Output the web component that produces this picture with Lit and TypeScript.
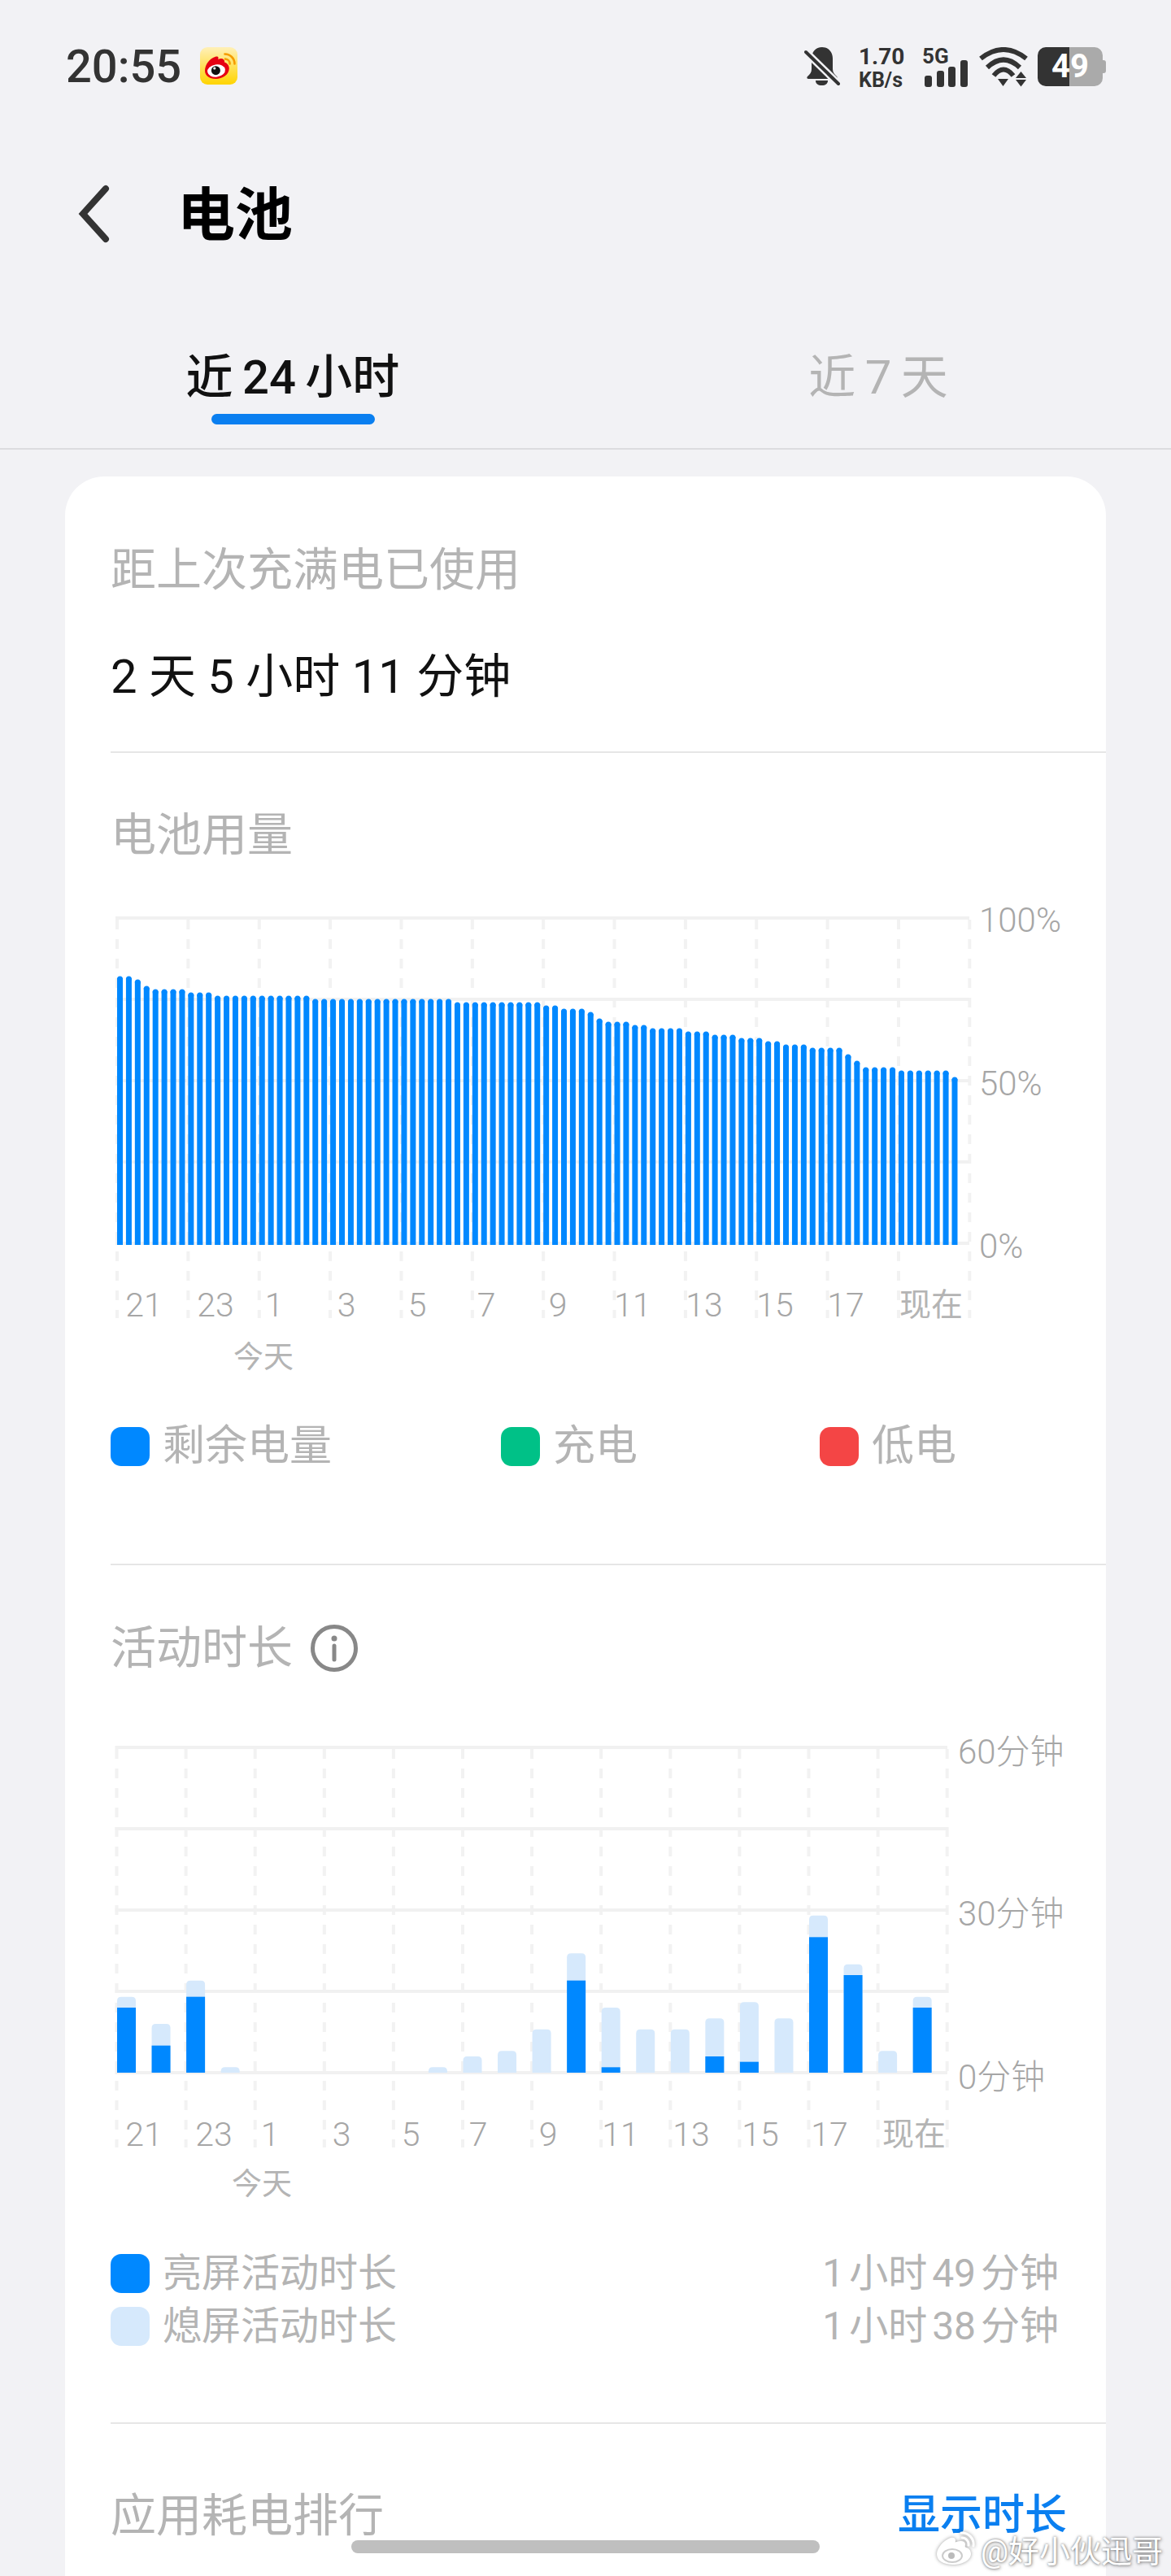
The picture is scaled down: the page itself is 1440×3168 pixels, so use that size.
import { LitElement, html, svg, css } from 'lit';
import { customElement } from 'lit/decorators.js';

// battery level per 15 minute slot, in percent
const LEVELS = [
  82, 82, 81, 79, 78, 78, 78, 78, 77, 77, 77,
  76, 76, 76, 76, 76, 76, 76, 76, 76, 76, 76,
  75, 75, 75, 75, 75, 75, 75, 75, 75, 75, 75, 75, 75, 75, 75, 75,
  74, 74, 74, 74, 74, 74, 74, 74, 74, 74,
  73, 73, 72, 72, 72, 71, 69, 68, 68, 68, 67, 67,
  66, 66, 66, 66, 65, 65, 65, 64, 64, 64, 63, 63, 63, 62, 62,
  61, 61, 61, 60, 60, 60, 60, 58, 56, 54, 54, 54, 54,
  53, 53, 53, 53, 53, 53, 51,
];

// [screen on, screen off] minutes per hour
const ACTIVITY: [number, number][] = [
  [12, 2], [5, 4], [14, 3], [0, 1], [0, 0], [0, 0], [0, 0], [0, 0], [0, 0],
  [0, 1], [0, 3], [0, 4], [0, 8], [17, 5], [1, 11], [0, 8], [0, 8], [3, 7],
  [2, 11], [0, 10], [25, 4], [18, 2], [0, 4], [12, 2],
];

const BATTERY_X: [string, number][] = [
  ['21', 41], ['23', 129], ['1', 201], ['3', 290], ['5', 377], ['7', 462],
  ['9', 550], ['11', 642], ['13', 730], ['15', 817], ['17', 904], ['现在', 1009],
];

const ACTIVITY_X: [string, number][] = [
  ['21', 41], ['23', 127], ['1', 196], ['3', 284], ['5', 369], ['7', 452],
  ['9', 538], ['11', 627], ['13', 714], ['15', 799], ['17', 884], ['现在', 988],
];

const BLUE = '#0088ff';
const PALE = '#d6e9fc';

function grid(x0: number, step: number, right: number) {
  const top = 8;
  const bottom = 408;
  const v = [];
  for (let i = 0; i <= 12; i++) {
    const x = x0 + step * i;
    v.push(svg`<line x1=${x} x2=${x} y1=${top + 2} y2=${bottom + 92} class="dash" />`);
  }
  const h = [];
  for (let y = top; y <= bottom; y += 100) {
    h.push(svg`<line x1=${x0 - 2} x2=${right} y1=${y} y2=${y} class="rule" />`);
  }
  return svg`${v}${h}`;
}

function topRounded(x: number, y: number, w: number, h: number, r: number) {
  const rr = Math.min(r, h);
  return `M${x} ${y + h}V${y + rr}Q${x} ${y} ${x + rr} ${y}H${x + w - rr}Q${x + w} ${y} ${x + w} ${y + rr}V${y + h}Z`;
}

@customElement('app-root')
export class AppRoot extends LitElement {
  static styles = css`
    :host {
      display: block;
      position: relative;
      height: 3168px;
      overflow: hidden;
      background: #f2f2f5;
      font-family: Roboto, 'Noto Sans CJK SC', sans-serif;
      color: #b4b4b4;
    }

    .status {
      display: flex;
      align-items: flex-start;
      height: 48px;
      padding: 58px 80px 0 81px;
      color: #333;
    }
    .time {
      font-size: 56px;
      line-height: 48px;
      font-weight: 500;
    }
    .weibo {
      width: 46px;
      height: 46px;
      margin-left: 23px;
    }
    .status-right {
      margin-left: auto;
      display: flex;
      align-items: flex-start;
    }
    .bell {
      width: 44px;
      height: 48px;
      margin-right: 23px;
    }
    .speed {
      width: 54px;
      margin-right: 24px;
      font-weight: 700;
      text-align: center;
    }
    .speed div:first-child {
      font-size: 28px;
      line-height: 24px;
      margin-top: 0;
    }
    .speed div:last-child {
      font-size: 25px;
      line-height: 24px;
      margin-top: 5px;
    }
    .net {
      position: relative;
      width: 56px;
      height: 49px;
      margin-right: 14px;
    }
    .net svg {
      display: block;
      width: 56px;
      height: 49px;
    }
    .net span {
      position: absolute;
      left: 0;
      top: -1px;
      font-size: 26px;
      line-height: 24px;
      font-weight: 700;
    }
    .wifi {
      width: 60px;
      height: 49px;
      margin-right: 12px;
    }
    .battery {
      position: relative;
      width: 80px;
      height: 48px;
      margin-right: 4px;
      border-radius: 10px;
      background: linear-gradient(90deg, #333 0 39px, #aaa 39px);
      color: #fff;
      font-size: 40px;
      line-height: 48px;
      font-weight: 700;
      text-align: center;
    }
    .battery::after {
      content: '';
      position: absolute;
      right: -4px;
      top: 16px;
      width: 4px;
      height: 16px;
      border-radius: 0 3px 3px 0;
      background: #aaa;
    }

    .header {
      display: flex;
      align-items: center;
      height: 70px;
      margin-top: 122px;
      padding-left: 92px;
    }
    .back {
      width: 44px;
      height: 72px;
    }
    .title {
      margin-left: 82px;
      margin-top: 3px;
      font-size: 71px;
      line-height: 70px;
      font-weight: 700;
      color: #000;
    }

    .tabs {
      display: grid;
      grid-template-columns: 720px 720px;
      height: 129px;
      margin-top: 124px;
      border-bottom: 2px solid #dcdcdf;
    }
    .tab {
      display: flex;
      flex-direction: column;
      align-items: center;
      padding-top: 2px;
      font-size: 58px;
      line-height: 80px;
      word-spacing: -3px;
    }
    .tab.active {
      color: #111;
      font-weight: 500;
    }
    .tab i {
      display: block;
      width: 201px;
      height: 13px;
      margin-top: 5px;
      border-radius: 7px;
      background: #0a7ff0;
    }

    .card {
      margin: 33px 80px 0;
      padding: 80px 0 0 56px;
      height: 2600px;
      background: #fff;
      border-radius: 48px 48px 0 0;
    }
    .heading {
      font-size: 56px;
      line-height: 70px;
    }
    .used {
      margin-top: 56px;
      font-size: 58px;
      line-height: 80px;
      color: #111;
      font-weight: 400;
    }
    .divider {
      height: 2px;
      background: #e6e6e6;
    }
    .used + .divider {
      margin-top: 52px;
      margin-bottom: 66px;
    }

    .chart {
      position: relative;
      width: 1224px;
    }
    .chart svg {
      display: block;
      position: absolute;
      left: 0;
      top: 0;
      width: 1224px;
      height: 510px;
    }
    .dash {
      stroke: #f2f2f2;
      stroke-width: 4;
      stroke-dasharray: 12 12;
    }
    .rule {
      stroke: #f1f1f1;
      stroke-width: 4;
    }
    .tick,
    .today,
    .yval {
      position: absolute;
      white-space: nowrap;
      font-weight: 300;
      color: #a6a6a6;
    }
    .tick {
      top: 459px;
      transform: translateX(-50%);
      font-size: 41px;
      line-height: 50px;
    }
    .tick.cjk {
      font-size: 39px;
      color: #b4b4b4;
      font-weight: 400;
    }
    .today {
      transform: translateX(-50%);
      font-size: 37px;
      line-height: 50px;
      font-weight: 400;
      color: #b4b4b4;
    }
    .yval {
      font-size: 42px;
      line-height: 50px;
    }
    .chart.battery-chart {
      height: 578px;
      margin-top: 59px;
    }
    .chart.activity-chart {
      height: 570px;
      margin-top: 79px;
    }

    .legend {
      display: grid;
      grid-template-columns: 480px 392px auto;
      margin-top: 56px;
      font-size: 52px;
      line-height: 48px;
    }
    .key {
      display: flex;
      align-items: center;
      gap: 16px;
    }
    .swatch {
      width: 48px;
      height: 48px;
      border-radius: 13px;
      flex: none;
    }
    .sec-two {
      margin-top: 120px;
      margin-bottom: 67px;
    }
    .title-row {
      display: flex;
      align-items: center;
    }
    .info {
      width: 60px;
      height: 60px;
      margin-left: 21px;
    }

    .usage {
      display: flex;
      flex-direction: column;
      gap: 17px;
      margin-top: 61px;
      padding-right: 58px;
      font-size: 48px;
      line-height: 48px;
    }
    .usage-row {
      display: flex;
      justify-content: space-between;
      align-items: center;
      word-spacing: -6px;
    }
    .usage + .divider {
      margin-top: 94px;
      margin-bottom: 78px;
    }
    .rank {
      display: flex;
      justify-content: space-between;
      align-items: center;
      padding-right: 48px;
    }
    .rank b {
      font-size: 52px;
      line-height: 70px;
      font-weight: 500;
      color: #0a7ff0;
    }

    .home {
      position: absolute;
      left: 432px;
      top: 3124px;
      width: 576px;
      height: 16px;
      border-radius: 8px;
      background: #bfbfbf;
    }
    .mark {
      position: absolute;
      left: 1150px;
      top: 3110px;
      display: flex;
      align-items: center;
      gap: 6px;
      height: 48px;
      font-size: 38px;
      color: #fff;
      text-shadow: 0 0 3px rgba(0, 0, 0, 0.5), 1px 1px 4px rgba(0, 0, 0, 0.35);
      white-space: nowrap;
    }
    .mark svg {
      width: 50px;
      height: 42px;
      filter: drop-shadow(0 0 2px rgba(0, 0, 0, 0.4));
    }
  `;

  private batteryBars() {
    const x0 = 8.5;
    const step = 87.36 / 8;
    return LEVELS.map((pct, i) => {
      const h = pct * 4;
      return svg`<rect x=${x0 + i * step - 0.5} y=${408 - h + 2} width="7" height=${h} fill=${BLUE} />
        <circle cx=${x0 + i * step + 3} cy=${408 - h + 3} r="3.5" fill=${BLUE} />`;
    });
  }

  private activityBars() {
    const x0 = 8;
    const step = 85.1 / 2;
    const perMin = 400 / 60;
    return ACTIVITY.map(([on, off], i) => {
      const x = x0 + i * step;
      const hOn = on * perMin;
      const hAll = (on + off) * perMin;
      return svg`
        ${hAll > 0 ? svg`<path d=${topRounded(x, 408 - hAll, 23, hAll, 5)} fill=${PALE} />` : ''}
        ${hOn > 0 ? svg`<rect x=${x} y=${408 - hOn} width="23" height=${hOn} fill=${BLUE} />` : ''}
      `;
    });
  }

  private weiboIcon() {
    return html`<svg class="weibo" viewBox="0 0 46 46">
      <defs>
        <linearGradient id="wb" x1="0" y1="0" x2="0" y2="1">
          <stop offset="0" stop-color="#fff0b8" />
          <stop offset="1" stop-color="#ffd400" />
        </linearGradient>
      </defs>
      <rect width="46" height="46" rx="9" fill="url(#wb)" />
      <path d="M30.5 8.5a12 12 0 0 1 12 12" fill="none" stroke="#f59c00" stroke-width="2.6" stroke-linecap="round" />
      <path d="M31 14.5a6 6 0 0 1 5.6 6" fill="none" stroke="#f59c00" stroke-width="2.6" stroke-linecap="round" />
      <path
        d="M6 29c0-6 4-13 10-16 2-1 5-2 6-1 .8.6.6 2 .2 3 2.5-1 5-1.4 6.6 0 1.2 1 1.4 2.6 1.2 3.4 3 .9 5.800 3.600 5.800 7.600 0 8-8.800 13-16 13-8 0-13.800-3.600-13.800-10z"
        fill="#e60012"
      />
      <ellipse cx="20" cy="29" rx="11" ry="7.600" fill="#fff" transform="rotate(-8 20 29)" />
      <circle cx="19.400" cy="28.700" r="5.500" fill="#111" />
      <circle cx="17.800" cy="26" r="1.600" fill="#fff" />
    </svg>`;
  }

  private bellIcon() {
    return html`<svg class="bell" viewBox="0 0 44 48">
      <path
        d="M22 0c-8 0-13 6-13 14v13c0 4-2 6-5 9-1 1-1 3 1 3h34c2 0 2-2 1-3-3-3-5-5-5-9V14C35 6 30 0 22 0z"
        fill="#333"
      />
      <path d="M14 41h15c0 4-3 6-7.500 6S14 45 14 41z" fill="#333" />
      <path d="M1 5l41 40" stroke="#f2f2f5" stroke-width="9" />
      <path d="M2 6l40 39" stroke="#333" stroke-width="4" stroke-linecap="round" />
    </svg>`;
  }

  private wifiIcon() {
    return html`<svg class="wifi" viewBox="0 0 60 49" fill="none" stroke="#333" stroke-width="6">
      <path d="M2 14Q30 -8 58 14" />
      <path d="M10 25Q30 6 50 25" />
      <path d="M18 35Q30 20 42 35" />
      <path d="M23 39h13l-6.500 9z" fill="#333" stroke="none" />
      <path d="M51.500 30l6.500 8H45z" fill="#333" stroke="none" />
      <path d="M45 40h13l-6.500 8.500z" fill="#333" stroke="none" />
    </svg>`;
  }

  render() {
    return html`
      <div class="status">
        <div class="time">20:55</div>
        ${this.weiboIcon()}
        <div class="status-right">
          ${this.bellIcon()}
          <div class="speed"><div>1.70</div><div>KB/s</div></div>
          <div class="net">
            <span>5G</span>
            <svg viewBox="0 0 56 49" fill="#333">
              <rect x="3" y="35" width="9" height="14" rx="3" />
              <rect x="18" y="29" width="9" height="20" rx="3" />
              <rect x="32" y="24" width="9" height="25" rx="3" />
              <rect x="47" y="16" width="9" height="33" rx="3" />
            </svg>
          </div>
          ${this.wifiIcon()}
          <div class="battery">49</div>
        </div>
      </div>

      <div class="header">
        <svg class="back" viewBox="0 0 44 72" fill="none" stroke="#333" stroke-width="8" stroke-linecap="round">
          <path d="M38 5L10 36l28 31" />
        </svg>
        <div class="title">电池</div>
      </div>

      <div class="tabs">
        <div class="tab active">近 24 小时<i></i></div>
        <div class="tab">近 7 天</div>
      </div>

      <div class="card">
        <div class="heading">距上次充满电已使用</div>
        <div class="used">2 天 5 小时 11 分钟</div>
        <div class="divider"></div>

        <div class="heading">电池用量</div>
        <div class="chart battery-chart">
          <svg viewBox="0 0 1224 510">${grid(8, 87.36, 1056)}${this.batteryBars()}</svg>
          ${BATTERY_X.map(([t, x]) => html`<span class="tick ${t.length === 2 && t > '9' ? 'cjk' : ''}" style="left:${x}px">${t}</span>`)}
          <span class="today" style="left:188px;top:524px">今天</span>
          <span class="yval" style="left:1068px;top:-14px">100%</span>
          <span class="yval" style="left:1068px;top:187px">50%</span>
          <span class="yval" style="left:1068px;top:387px">0%</span>
        </div>
        <div class="legend">
          <div class="key"><span class="swatch" style="background:${BLUE}"></span>剩余电量</div>
          <div class="key"><span class="swatch" style="background:#00c187"></span>充电</div>
          <div class="key"><span class="swatch" style="background:#f44545"></span>低电</div>
        </div>

        <div class="divider sec-two"></div>

        <div class="heading title-row">
          活动时长
          <svg class="info" viewBox="0 0 60 60" fill="none" stroke="#888" stroke-width="5">
            <circle cx="30" cy="30" r="26.500" />
            <path d="M30 27v17" stroke-linecap="round" />
            <circle cx="30" cy="18" r="3.500" fill="#888" stroke="none" />
          </svg>
        </div>
        <div class="chart activity-chart">
          <svg viewBox="0 0 1224 510">${grid(7.5, 85.1, 1029)}${this.activityBars()}</svg>
          ${ACTIVITY_X.map(([t, x]) => html`<span class="tick ${t.length === 2 && t > '9' ? 'cjk' : ''}" style="left:${x}px">${t}</span>`)}
          <span class="today" style="left:186px;top:521px">今天</span>
          <span class="yval" style="left:1042px;top:-11px">60分钟</span>
          <span class="yval" style="left:1042px;top:188px">30分钟</span>
          <span class="yval" style="left:1042px;top:389px">0分钟</span>
        </div>
        <div class="usage">
          <div class="usage-row">
            <div class="key"><span class="swatch" style="background:${BLUE}"></span>亮屏活动时长</div>
            <span>1 小时 49 分钟</span>
          </div>
          <div class="usage-row">
            <div class="key"><span class="swatch" style="background:${PALE}"></span>熄屏活动时长</div>
            <span>1 小时 38 分钟</span>
          </div>
        </div>
        <div class="divider"></div>
        <div class="rank">
          <div class="heading">应用耗电排行</div>
          <b>显示时长</b>
        </div>
      </div>

      <div class="home"></div>
      <div class="mark">
        <svg viewBox="0 0 50 42">
          <path
            d="M2 28c0-7 8-17 17-20 3-1 6 0 6 3 0 2-1 3 1 2 6-2 11-1 11 3 0 2-1 3 1 4 4 1 6 4 6 8 0 7-10 13-22 13S2 36 2 28z"
            fill="#fff"
          />
          <ellipse cx="21" cy="30" rx="12" ry="8" fill="none" stroke="#ccc" stroke-width="2" />
          <circle cx="20" cy="30" r="4" fill="#bbb" />
          <path d="M32 2a14 14 0 0 1 15 16M33 8a8 8 0 0 1 8 9" fill="none" stroke="#fff" stroke-width="3" stroke-linecap="round" />
        </svg>
        <span>@好小伙迅哥</span>
      </div>
    `;
  }
}

declare global {
  interface HTMLElementTagNameMap {
    'app-root': AppRoot;
  }
}
